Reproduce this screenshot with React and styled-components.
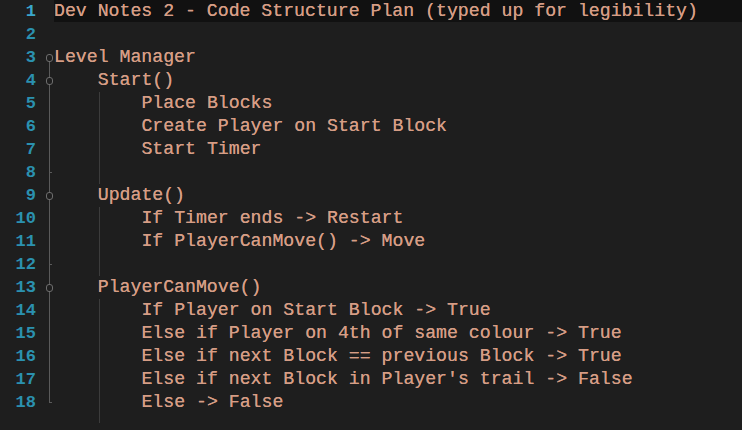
import React from 'react';
import styled, { createGlobalStyle, css } from 'styled-components';

const GlobalStyle = createGlobalStyle`
  html, body {
    margin: 0;
    padding: 0;
    background: #1e1e1e;
  }
`;

const Editor = styled.div`
  width: 742px;
  height: 430px;
  background: #1e1e1e;
  overflow: hidden;
  font-family: "Liberation Mono", "DejaVu Sans Mono", monospace;
`;

const Row = styled.div`
  display: flex;
  height: 23px;
`;

const LineNo = styled.div`
  width: 36px;
  flex: none;
  text-align: right;
  font-size: 17px;
  line-height: 23px;
  color: ${(p) => (p.$active ? '#3aa6cc' : '#2b91af')};
  font-weight: bold;
`;

// fold margin with the outline line and markers
const Fold = styled.div`
  position: relative;
  width: 18px;
  flex: none;

  &::before {
    content: "";
    position: absolute;
    left: 13px;
    width: 1px;
    background: #5a5a5a;
    ${(p) => p.$kind === 'none' && css`display: none;`}
    ${(p) => p.$kind === 'top' && css`top: 12px; bottom: 0;`}
    ${(p) => (p.$kind === 'mid' || p.$kind === 'marker' || p.$kind === 'tick') && css`top: 0; bottom: 0;`}
    ${(p) => p.$kind === 'end' && css`top: 0; height: 12px;`}
  }

  &::after {
    content: "";
    position: absolute;
    ${(p) => (p.$kind === 'top' || p.$kind === 'marker') && css`
      left: 10px;
      top: 8px;
      width: 5px;
      height: 6px;
      border: 1px solid #6e6e6e;
      border-radius: 3px;
      background: #1e1e1e;
    `}
    ${(p) => (p.$kind === 'tick' || p.$kind === 'end') && css`
      left: 13px;
      top: 11px;
      width: 3px;
      height: 1px;
      background: #5a5a5a;
    `}
    ${(p) => (p.$kind === 'none' || p.$kind === 'mid') && css`display: none;`}
  }
`;

const Code = styled.div`
  position: relative;
  flex: 1;
  padding-left: ${(p) => p.$indent * 10.93}px;
  font-size: 18.2px;
  line-height: 23px;
  color: #d69d85;
  white-space: pre;
  background: ${(p) => (p.$active ? '#111111' : 'transparent')};
  height: ${(p) => (p.$active ? '22px' : '23px')};
  text-shadow: 0 0 0.4px #d69d85;

  ${(p) => p.$guide && css`
    &::before {
      content: "";
      position: absolute;
      left: 45px;
      top: 0;
      bottom: ${p.$guide === 'last' ? '-9px' : '0'};
      width: 1px;
      background: #3c3c3c;
    }
  `}
`;

const lines = [
  { text: 'Dev Notes 2 - Code Structure Plan (typed up for legibility)', indent: 0, fold: 'none' },
  { text: '', indent: 0, fold: 'none' },
  { text: 'Level Manager', indent: 0, fold: 'top' },
  { text: 'Start()', indent: 4, fold: 'marker' },
  { text: 'Place Blocks', indent: 8, fold: 'mid', guide: true },
  { text: 'Create Player on Start Block', indent: 8, fold: 'mid', guide: true },
  { text: 'Start Timer', indent: 8, fold: 'mid', guide: true },
  { text: '', indent: 0, fold: 'tick', guide: true },
  { text: 'Update()', indent: 4, fold: 'marker' },
  { text: 'If Timer ends -> Restart', indent: 8, fold: 'mid', guide: true },
  { text: 'If PlayerCanMove() -> Move', indent: 8, fold: 'mid', guide: true },
  { text: '', indent: 0, fold: 'tick', guide: true },
  { text: 'PlayerCanMove()', indent: 4, fold: 'marker' },
  { text: 'If Player on Start Block -> True', indent: 8, fold: 'mid', guide: true },
  { text: 'Else if Player on 4th of same colour -> True', indent: 8, fold: 'mid', guide: true },
  { text: 'Else if next Block == previous Block -> True', indent: 8, fold: 'mid', guide: true },
  { text: "Else if next Block in Player's trail -> False", indent: 8, fold: 'mid', guide: true },
  { text: 'Else -> False', indent: 8, fold: 'end', guide: 'last' },
];

export default function App() {
  return (
    <>
      <GlobalStyle />
      <Editor>
        {lines.map((line, i) => (
          <Row key={i}>
            <LineNo $active={i === 0}>{i + 1}</LineNo>
            <Fold $kind={line.fold} />
            <Code $indent={line.indent} $active={i === 0} $guide={line.guide}>
              {line.text}
            </Code>
          </Row>
        ))}
      </Editor>
    </>
  );
}
